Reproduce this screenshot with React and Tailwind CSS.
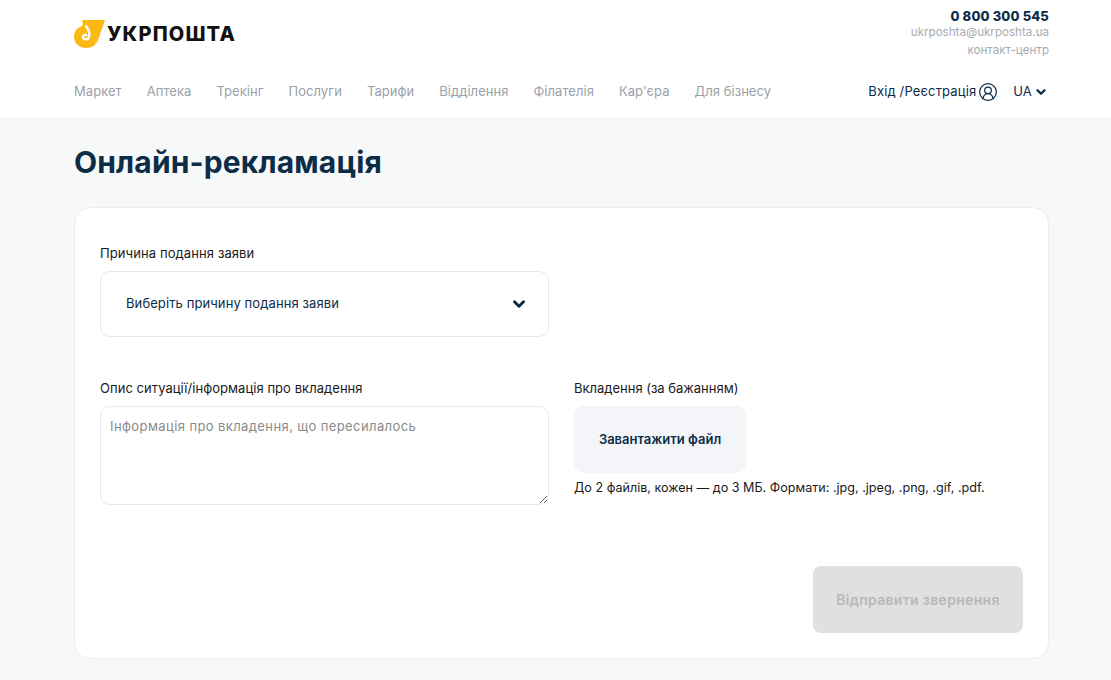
import React from 'react';
import { ChevronDown, CircleUserRound } from 'lucide-react';

const navItems = ['Маркет', 'Аптека', 'Трекінг', 'Послуги', 'Тарифи', 'Відділення', 'Філателія', "Кар'єра", 'Для бізнесу'];

const Logo = () => (
    <div className="flex items-center gap-[2px]">
        <svg width="31" height="28" viewBox="0 0 31 28">
            <path d="M8 0H31L24 20C22 25 18 28 12 28C5 28 0 23 0 17C0 11 3 8 8 6C9 4 9 2 8 0Z" fill="#fdb913" />
            <path d="M12 6C15 10 16 14 15 17C14 20 10 20 9 18C8.500 16 10 14.500 12 15" fill="none" stroke="#ffffff" strokeWidth="2.4" strokeLinecap="round" />
        </svg>
        <span className="text-[20px] leading-[28px] font-extrabold text-[#111] tracking-[1.15px] font-['Inter',sans-serif]">УКРПОШТА</span>
    </div>
);

const App = () => {
    return (
        <div className="h-[680px] overflow-hidden bg-[#f7f8f8] font-['Inter','Noto_Sans',sans-serif]">
            <header className="bg-white h-[117px] pl-[74px] pr-[62px] flex flex-col">
                <div className="flex justify-between items-start h-[74px]">
                    <div className="pt-[20px]"><Logo /></div>
                    <div className="text-right pt-[8px] text-[11.6px] text-[#a5abb2]">
                        <p className="text-[13px] leading-[16px] font-extrabold text-[#0c2d48] tracking-[0.15px]">0 800 300 545</p>
                        <p className="leading-[16px]">ukrposhta@ukrposhta.ua</p>
                        <p className="leading-[20px]">контакт-центр</p>
                    </div>
                </div>
                <nav className="flex items-center justify-between h-[35px]">
                    <div className="flex gap-[25px] text-[13px] tracking-[0.05px] text-[#9aa1a8]">
                        {navItems.map(item => <span key={item}>{item}</span>)}
                    </div>
                    <div className="flex items-center text-[13px] tracking-[0.15px] text-[#0c2d48] pr-[1.500px]">
                        <span>Вхід /Реєстрація</span>
                        <CircleUserRound className="w-[20px] h-[20px] ml-[2px]" strokeWidth={1.5} />
                        <span className="ml-[15px]">UA</span>
                        <ChevronDown className="w-[14px] h-[14px] ml-[1.500px]" strokeWidth={4} />
                    </div>
                </nav>
            </header>

            <main className="pl-[74px] pr-[62px]">
                <h1 className="text-[30px] leading-[36px] font-bold text-[#0c2d48] mt-[27px] tracking-[0.15px] font-['Inter',sans-serif]">Онлайн-рекламація</h1>
                <section className="bg-white border border-[#ebedef] rounded-[16px] mt-[27px] h-[452px] px-[25px] pt-[37px] flex flex-col">
                    <label className="text-[13px] leading-[17px] tracking-[0.1px] text-[#1a1a1a]">Причина подання заяви</label>
                    <div className="w-[449px] h-[66px] mt-[9px] border border-[#e6e8ea] rounded-[10px] flex items-center justify-between pl-[25px] pr-[20px] text-[13px] tracking-[0.1px] text-[#0c2d48]">
                        <span>Виберіть причину подання заяви</span>
                        <ChevronDown className="w-[18px] h-[18px]" strokeWidth={4} />
                    </div>
                    <div className="flex gap-[25px] mt-[43px]">
                        <div className="w-[449px]">
                            <label className="block text-[13px] leading-[17px] tracking-[0.05px] text-[#1a1a1a]">Опис ситуації/інформація про вкладення</label>
                            <textarea readOnly placeholder="Інформація про вкладення, що пересилалось" className="block w-full h-[99px] mt-[9px] border border-[#e6e8ea] rounded-[10px] px-[9px] py-[10px] text-[13px] tracking-[0.4px] placeholder:text-[#8a8a8a] outline-none" />
                        </div>
                        <div>
                            <label className="block text-[13px] leading-[17px] text-[#1a1a1a]">Вкладення (за бажанням)</label>
                            <div className="w-[172px] h-[67px] mt-[9px] bg-[#f3f5f8] rounded-[10px] flex items-center justify-center text-[13px] font-semibold text-[#0c2d48]">Завантажити файл</div>
                            <p className="text-[12.6px] leading-[17px] mt-[6px] text-[#1a1a1a]">До 2 файлів, кожен — до 3 МБ. Формати: .jpg, .jpeg, .png, .gif, .pdf.</p>
                        </div>
                    </div>
                    <div className="flex justify-end mt-[61px]">
                        <button className="w-[210px] h-[67px] bg-[#e0e0e0] rounded-[8px] text-[14px] tracking-[0.3px] font-semibold text-[#b8b8b8]">Відправити звернення</button>
                    </div>
                </section>
            </main>
        </div>
    );
};

export default App;
